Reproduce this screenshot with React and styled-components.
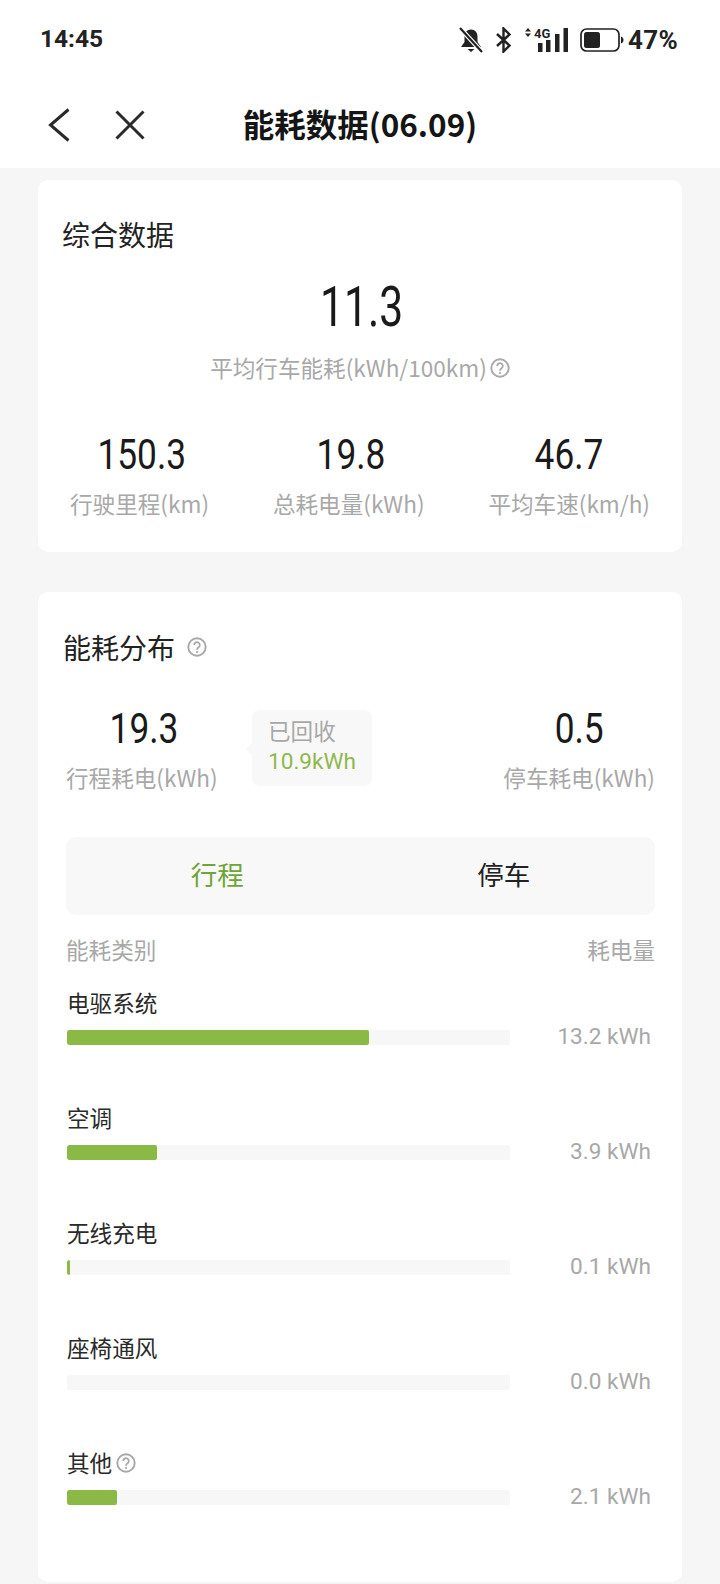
import React from 'react';
import styled, { createGlobalStyle } from 'styled-components';

const GlobalStyle = createGlobalStyle`
  html, body {
    margin: 0;
    padding: 0;
    background: #f6f6f6;
  }
  * {
    box-sizing: border-box;
  }
  body {
    font-family: "Noto Sans CJK SC", Roboto, sans-serif;
    color: #1c1c1c;
  }
`;

const StPage = styled.div`
  width: 720px;
  height: 1584px;
  overflow: hidden;
  background: #f6f6f6;
`;

const StTop = styled.header`
  height: 168px;
  background: #fff;
`;

const StStatusBar = styled.div`
  height: 84px;
  padding: 24px 41px 0 40px;
  display: flex;
  justify-content: space-between;
  align-items: flex-start;
`;

const StTime = styled.span`
  font: 700 24.5px/30px Roboto, sans-serif;
  color: #222;
`;

const StStatusIcons = styled.div`
  display: flex;
  align-items: center;
  height: 32px;
`;

const StStatusIcon = styled.svg`
  flex: none;
  margin-left: ${({ $ml }) => $ml || 0}px;
`;

const StPercent = styled.span`
  font: 700 26px/30px Roboto, sans-serif;
  color: #222;
  margin-left: 4px;
  width: 51px;
  letter-spacing: 0.3px;
  white-space: nowrap;
`;

const StNav = styled.nav`
  height: 84px;
  padding: 0 0 3px 48px;
  display: flex;
  align-items: center;
  position: relative;
`;

const StNavButton = styled.button`
  border: 0;
  background: none;
  padding: 0;
  display: flex;
  margin-right: ${({ $gap }) => $gap || 0}px;
`;

const StNavTitle = styled.h1`
  position: absolute;
  left: 0;
  right: 0;
  top: 18px;
  margin: 0;
  text-align: center;
  font-size: 31.5px;
  line-height: 42px;
  font-weight: 700;
  color: #151515;
`;

const StContent = styled.main`
  padding: 12px 38px 0;
  display: flex;
  flex-direction: column;
  gap: 40px;
`;

const StCard = styled.section`
  background: #fff;
  border-radius: 10px;
  height: ${({ $h }) => $h}px;
  padding: ${({ $pad }) => $pad};
`;

const StCardTitle = styled.h2`
  margin: 0;
  padding-left: ${({ $indent }) => $indent || 0}px;
  margin-left: ${({ $shift }) => $shift || 0}px;
  font-size: 28px;
  line-height: 40px;
  font-weight: 400;
  color: #222;
  display: flex;
  align-items: center;
`;

const StHelpIcon = styled.svg`
  flex: none;
  margin-left: ${({ $ml }) => $ml}px;
`;

const StHero = styled.div`
  margin-top: 20px;
  display: flex;
  flex-direction: column;
  align-items: center;
`;

const StNumber = styled.div`
  font-family: Roboto, sans-serif;
  font-weight: 400;
  font-size: ${({ $size }) => $size}px;
  line-height: ${({ $lh }) => $lh}px;
  color: #1a1a1a;
  transform: translateX(${({ $nudge }) => $nudge || 0}px) scaleX(${({ $sx }) => $sx || 0.84});
  text-align: center;
`;

const StLabel = styled.div`
  margin-top: ${({ $mt }) => $mt || 0}px;
  font-size: 22.6px;
  line-height: 32px;
  color: #a8a8a8;
  display: flex;
  align-items: center;
  justify-content: center;
  white-space: nowrap;
`;

const StTriple = styled.div`
  margin-top: 46px;
  padding: 0 32px;
  display: flex;
  justify-content: space-between;
`;

const StStat = styled.div`
  display: flex;
  flex-direction: column;
  align-items: center;
`;

const StTripRow = styled.div`
  margin-top: 37px;
  display: flex;
  align-items: flex-start;
  justify-content: space-between;
  position: relative;
`;

const StBubble = styled.div`
  position: absolute;
  left: 186px;
  top: 6px;
  width: 120px;
  height: 76px;
  padding: 5px 16px;
  background: #f8f8f8;
  border-radius: 8px;
  font-size: 22.6px;
  line-height: 31px;
  color: #a8a8a8;
  &::before {
    content: '';
    position: absolute;
    left: -6px;
    top: 33px;
    border-style: solid;
    border-width: 6px 6px 6px 0;
    border-color: transparent #f8f8f8 transparent transparent;
  }
`;

const StBubbleValue = styled.div`
  color: #8fb94f;
  font-family: Roboto, sans-serif;
`;

const StTabs = styled.div`
  margin-top: 43px;
  height: 78px;
  padding: 0 8px;
  background: #f8f8f8;
  border-radius: 10px;
  display: grid;
  grid-template-columns: 1fr 1fr;
`;

const StTab = styled.div`
  display: flex;
  align-items: center;
  justify-content: center;
  padding-bottom: 6px;
  font-size: 26.5px;
  color: ${({ $active }) => ($active ? '#6fa538' : '#222')};
`;

const StListHead = styled.div`
  margin-top: 19px;
  margin-bottom: 21px;
  display: flex;
  justify-content: space-between;
  font-size: 22.6px;
  line-height: 32px;
  color: #a8a8a8;
`;

const StRow = styled.div`
  height: 115px;
`;

const StRowLabel = styled.div`
  padding-left: 1px;
  font-size: 22.6px;
  line-height: 32px;
  color: #2a2a2a;
  display: flex;
  align-items: center;
`;

const StBarLine = styled.div`
  margin-top: 6px;
  display: flex;
  align-items: center;
  justify-content: space-between;
`;

const StTrack = styled.div`
  width: 443px;
  margin-left: 1px;
  height: 15px;
  background: #f7f7f7;
  border-radius: 2px;
  overflow: hidden;
`;

const StFill = styled.div`
  height: 100%;
  background: #8aba45;
  border-radius: 2px;
`;

const StRowValue = styled.div`
  font-family: Roboto, sans-serif;
  font-size: 22.6px;
  line-height: 24px;
  color: #a8a8a8;
  padding-right: 4px;
`;

const HelpIcon = ({ size = 20, ml = 0 }) => (
  <StHelpIcon width={size} height={size} viewBox="0 0 20 20" $ml={ml}>
    <circle cx="10" cy="10" r="8.7" fill="none" stroke="#a8a8a8" strokeWidth="1.9" />
    <path d="M7.2 8a2.8 2.8 0 1 1 4.400 2.300c-1 .7-1.600 1.200-1.600 2.400" fill="none" stroke="#a8a8a8" strokeWidth="1.800" />
    <circle cx="10" cy="15" r="1.100" fill="#a8a8a8" />
  </StHelpIcon>
);

const StatusIcons = () => (
  <StStatusIcons>
    <StStatusIcon width="24" height="26" viewBox="0 0 24 26">
      <path d="M12 2.500c-4 0-6.500 3-6.500 7v5.500L2 20h20l-3.500-5V9.500c0-4-2.500-7-6.500-7z" fill="#222" />
      <path d="M8.500 22h7l-3.500 3z" fill="#222" />
      <path d="M1 1l22 24" stroke="#fff" strokeWidth="4.500" />
      <path d="M1 1l22 24" stroke="#222" strokeWidth="2.200" />
    </StStatusIcon>
    <StStatusIcon width="15" height="26" viewBox="0 0 15 26" $ml={13}>
      <path d="M1 7l12.500 11.500L7.500 24.500V1.500l6 6L1 19" fill="none" stroke="#222" strokeWidth="2.400" />
    </StStatusIcon>
    <StStatusIcon width="43" height="26" viewBox="0 0 43 26" $ml={14}>
      <path d="M3 1l3 3.500H0zM3 10L0 6.500h6z" fill="#222" />
      <text x="9" y="11" fontFamily="Roboto, sans-serif" fontSize="13" fontWeight="700" fill="#222">4G</text>
      <rect x="13" y="16" width="4.500" height="9" fill="#222" />
      <rect x="21" y="13" width="4.500" height="12" fill="#222" />
      <rect x="30" y="7" width="4.500" height="18" fill="#222" />
      <rect x="38.500" y="1" width="4.500" height="24" fill="#222" />
    </StStatusIcon>
    <StStatusIcon width="44" height="24" viewBox="0 0 44 24" $ml={12}>
      <rect x="1" y="1" width="38" height="22" rx="5.500" fill="none" stroke="#222" strokeWidth="1.700" />
      <rect x="4" y="4" width="16" height="16" rx="2.500" fill="#222" />
      <path d="M41 8.500c1.500.5 2.500 1.800 2.500 3.500s-1 3-2.500 3.500z" fill="#222" />
    </StStatusIcon>
    <StPercent>47%</StPercent>
  </StStatusIcons>
);

const rows = [
  { name: '电驱系统', pct: 68.2, value: '13.2 kWh' },
  { name: '空调', pct: 20.3, value: '3.9 kWh' },
  { name: '无线充电', pct: 0.7, value: '0.1 kWh' },
  { name: '座椅通风', pct: 0, value: '0.0 kWh' },
  { name: '其他', pct: 11.2, value: '2.1 kWh', help: true },
];

const Stat = ({ value, label, nudge }) => (
  <StStat>
    <StNumber $size={42} $lh={50} $nudge={nudge}>{value}</StNumber>
    <StLabel $mt={8}>{label}</StLabel>
  </StStat>
);

const App = () => (
  <StPage>
    <GlobalStyle />
    <StTop>
      <StStatusBar>
        <StTime>14:45</StTime>
        <StatusIcons />
      </StStatusBar>
      <StNav>
        <StNavButton $gap={45}>
          <svg width="22" height="34" viewBox="0 0 22 34">
            <path d="M20.500 1.500L2.500 17l18 15.500" fill="none" stroke="#2a2a2a" strokeWidth="3" />
          </svg>
        </StNavButton>
        <StNavButton>
          <svg width="30" height="30" viewBox="0 0 30 30">
            <path d="M1.500 1.500l27 27M28.500 1.500l-27 27" fill="none" stroke="#2a2a2a" strokeWidth="3" />
          </svg>
        </StNavButton>
        <StNavTitle>能耗数据(06.09)</StNavTitle>
      </StNav>
    </StTop>
    <StContent>
      <StCard $h={372} $pad="34px 0 0 0">
        <StCardTitle $indent={24}>综合数据</StCardTitle>
        <StHero>
          <StNumber $size={56} $lh={66} $sx={0.76} $nudge={2}>11.3</StNumber>
          <StLabel $mt={12}>
            平均行车能耗(kWh/100km)
            <HelpIcon ml={3} />
          </StLabel>
        </StHero>
        <StTriple>
          <Stat value="150.3" label="行驶里程(km)" nudge={2} />
          <Stat value="19.8" label="总耗电量(kWh)" nudge={2} />
          <Stat value="46.7" label="平均车速(km/h)" />
        </StTriple>
      </StCard>
      <StCard $h={990} $pad="35px 27px 0 28px">
        <StCardTitle $shift={-3}>
          能耗分布
          <HelpIcon ml={12} />
        </StCardTitle>
        <StTripRow>
          <Stat value="19.3" label="行程耗电(kWh)" nudge={2} />
          <StBubble>
            已回收
            <StBubbleValue>10.9kWh</StBubbleValue>
          </StBubble>
          <Stat value="0.5" label="停车耗电(kWh)" />
        </StTripRow>
        <StTabs>
          <StTab $active>行程</StTab>
          <StTab>停车</StTab>
        </StTabs>
        <StListHead>
          <span>能耗类别</span>
          <span>耗电量</span>
        </StListHead>
        {rows.map(row => (
          <StRow key={row.name}>
            <StRowLabel>
              {row.name}
              {row.help && <HelpIcon ml={4} />}
            </StRowLabel>
            <StBarLine>
              <StTrack>
                <StFill style={{ width: `${row.pct}%` }} />
              </StTrack>
              <StRowValue>{row.value}</StRowValue>
            </StBarLine>
          </StRow>
        ))}
      </StCard>
    </StContent>
  </StPage>
);

export default App;
